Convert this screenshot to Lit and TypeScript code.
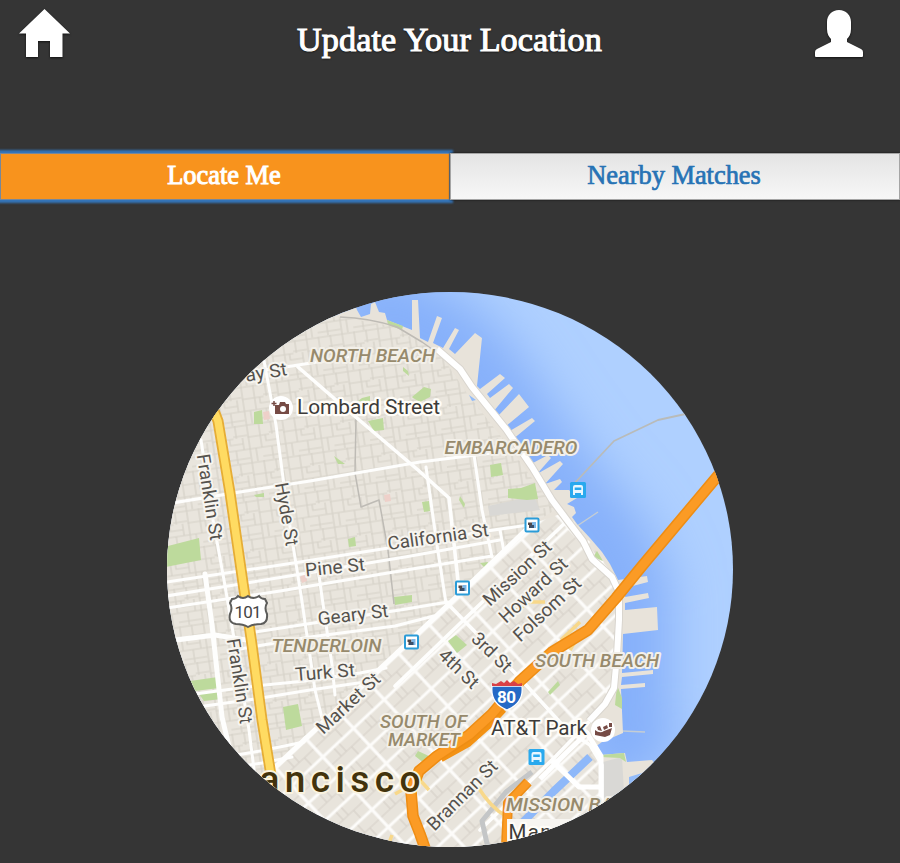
import { LitElement, html, svg, css } from "lit";
import { customElement, property, state } from "lit/decorators.js";

type Label = { t: string; x: number; y: number; r?: number; w: number; k: string };

const STREETS: Label[] = [
  { t: "ay St", x: 266, y: 372, r: -9, w: 42, k: "street" },
  { t: "Franklin St", x: 210, y: 497, r: 81, w: 87, k: "street" },
  { t: "Franklin St", x: 240, y: 681, r: 81, w: 86, k: "street" },
  { t: "Hyde St", x: 287, y: 514, r: 80, w: 64, k: "street" },
  { t: "California St", x: 438, y: 536.5, r: -8, w: 102, k: "street" },
  { t: "Pine St", x: 335, y: 567, r: -6, w: 60, k: "street" },
  { t: "Geary St", x: 353, y: 614.5, r: -7, w: 71, k: "street" },
  { t: "Turk St", x: 325, y: 672, r: -5, w: 60, k: "street" },
  { t: "Market St", x: 348, y: 703, r: -43, w: 80, k: "street" },
  { t: "Mission St", x: 517, y: 573, r: -43, w: 86, k: "street" },
  { t: "Howard St", x: 533, y: 590, r: -43, w: 86, k: "street" },
  { t: "Folsom St", x: 547, y: 609, r: -43, w: 85, k: "street" },
  { t: "3rd St", x: 492, y: 652, r: 44, w: 48, k: "street" },
  { t: "4th St", x: 459, y: 668.5, r: 44, w: 48, k: "street" },
  { t: "Brannan St", x: 462, y: 795, r: -45, w: 91, k: "street" },
];

const AREAS: Label[] = [
  { t: "NORTH BEACH", x: 372.5, y: 355, w: 125, k: "area" },
  { t: "EMBARCADERO", x: 511, y: 447.5, w: 133, k: "area" },
  { t: "TENDERLOIN", x: 326.5, y: 645.5, w: 110, k: "area" },
  { t: "SOUTH BEACH", x: 597, y: 660, w: 124, k: "area" },
  { t: "SOUTH OF", x: 423.5, y: 721, w: 87, k: "area" },
  { t: "MARKET", x: 424, y: 739.5, w: 72, k: "area" },
  { t: "MISSION BAY", x: 565, y: 804, w: 118, k: "area" },
  { t: "Lombard Street", x: 368.5, y: 407, w: 143, k: "place" },
  { t: "AT&T Park", x: 539, y: 728.5, w: 96, k: "place" },
];

const LAND =
  "M150 870V290H350L357 310L361 317L370 314L371 304L375 302L379 312L385 313L387 320L412 330L412 300L418 300L420 338L428 342L437 316L442 318L433 343L443 348L455 328L459 330L449 349L455 354L475 333L482 338L477 386L480 389L500 374L505 378L487 394L490 398L509 384L513 388L493 412L497 417L519 394L529 407L505 427L508 432L532 418L535 421L512 440L524 455L531 464L548 455L551 458L537 474L560 461L563 464L545 484L560 479L562 482L554 490L569 490L577 498L567 504L574 507L576 513L572 517L577 524L590 538L602 552L610 564L618 580L647 576L648 582L625 588V597L648 593L649 598L625 603V610L657 607L658 630L623 634L622 673L653 670V674L622 677L621 685L645 683V687L621 689L623 733L602 742L595 747L600 755L625 753L627 762L652 760L660 770V870Z";
const HILLS =
  "M150 870V300L340 317L397 327L439 352L466 392L510 448L555 510L532 524L448 602L266 772V870Z";
const SOMA =
  "M266 772L448 602L532 524L566 512L590 542L616 580L619 634L616 685L592 715L590 745L600 760V870H300Z";
const SHORE =
  "M340 300L412 328L450 350L480 385L515 438L560 500L600 545L622 590V740L650 775";
const EMBARCADERO_ROAD =
  "M437 349L460 369L472 387L506 429L532 467L552 500L567 520L583 541L592 559L612 577L619 592L619 620L617 655L614 688L605 704L589 721";
const SKYWAY =
  "M726 466L684 516L642 566L616 598L588 630L552 652L520 681L492 714L469 735L437 756L419 771L411 791L413 816L420 834L427 854";
const VAN_NESS = "M213 408L218 421L230 493L244 590L252 645L262 720L275 800";

const HILL_ROADS = [
  "M160 505L240 492L310 481L420 462L515 450",
  "M160 583L300 562L420 543L480 532L535 524",
  "M160 597L320 571L405 557L500 540",
  "M160 609L280 591L400 571L492 556",
  "M255 632L320 622L400 610L448 602",
  "M240 649L310 637L395 626L434 616",
  "M180 696L255 686L305 681L360 673L386 668",
  "M190 708L255 699L310 690L372 681",
  "M225 757L260 751L304 742",
  "M225 769L262 763L292 757",
  "M257 371L292 366L348 357",
  "M264 361L276 425L287 508L301 595L315 690L322 718",
  "M426 467L437 545L446 603",
  "M474 455L482 510L492 557",
  "M500 530L504 552",
  "M201 440L213 520L224 580L236 650L249 730L256 785",
  "M317 562L323 604L332 665L335 695",
];

const CITY_ROADS = [
  "M298 367L351 413L418 470L449 498L459 590",
  "M446 602L516 674L567 730L590 745L602 765V810",
  "M568 520L448 635L395 686",
  "M480 830L556 756L606 704",
];

const PARKS = [
  "M160 548L199 538L201 560L160 568Z",
  "M190 681L218 677L219 688L195 691Z",
  "M199 694L219 691L221 699L204 701Z",
  "M283 707L298 704L302 726L286 730Z",
  "M412 397L424 387L431 389L430 397L420 402L413 398Z",
  "M368 421L383 418L384 430L374 431Z",
  "M387 320L403 326L402 330L388 325Z",
  "M403 367L408 371L409 376L403 371Z",
  "M490 465L501 463L503 475L491 477Z",
  "M508 489L521 488L535 483L538 499L527 500L508 498Z",
  "M422 502L429 501L430 511L424 512Z",
  "M460 496L465 504L464 508L459 500Z",
  "M334 456L345 464L338 464Z",
  "M394 597L412 595V602L395 605Z",
  "M448 641L456 635L467 645L457 653Z",
  "M348 539L355 537L356 546L349 547Z",
  "M418 751L431 757L424 763L415 756Z",
  "M601 755L624 753L626 762L620 758L601 757Z",
  "M597 551L603 561L593 557Z",
  "M548 692L558 681L560 685L550 695Z",
  "M480 563L488 562L486 569Z",
  "M617 685L622 698V709L615 705Z",
  "M362 398L370 396L370 402L358 401Z",
  "M254 495L264 493V497H256Z",
  "M254 412L262 410L263 424L254 424Z",
];

@customElement("city-map")
class CityMap extends LitElement {
  static styles = css`
    :host { display: block; width: 566px; height: 555px; border-radius: 50%; overflow: hidden; }
    svg { display: block; }
    text { font-family: Roboto, "Liberation Sans", sans-serif; text-anchor: middle; paint-order: stroke; stroke: #fffdf8; stroke-linejoin: round; }
    .street { font-size: 18.5px; fill: #55524d; stroke-width: 4px; stroke: #f7f5f0; }
    .area { font-size: 18.5px; font-style: italic; font-weight: 500; fill: #978a6c; stroke-width: 4px; stroke: #f3f0e9; }
    .place { font-size: 20.5px; fill: #3d3b39; stroke-width: 4.5px; }
    .city { font-size: 37px; font-weight: 500; fill: #43330c; stroke-width: 4px; stroke: #faf3df; }
    .shield { font-size: 17px; fill: #444; stroke: none; }
    .interstate { font-size: 17px; font-weight: 700; fill: #fff; stroke: none; }
    .road { fill: none; stroke: #fefefd; stroke-linejoin: round; stroke-linecap: round; }
    .hill { stroke-width: 3px; }
    .town { stroke-width: 3.6px; }
    .line { fill: none; stroke-linejoin: round; }
    .park { fill: #bdda9c; }
  `;

  private label(l: Label) {
    return svg`<text class=${l.k} transform="translate(${l.x} ${l.y}) rotate(${l.r ?? 0})" y="6.5" textLength=${l.w} lengthAdjust="spacingAndGlyphs">${l.t}</text>`;
  }

  private station(x: number, y: number) {
    return svg`<g transform="translate(${x} ${y})">
      <rect x="-6.5" y="-6.5" width="13" height="13" rx="1" fill="#fff" stroke="#2b9cd8" stroke-width="2"/>
      <path d="M-4-2.5H0V3H-3V0H-4Z" fill="#514849"/><path d="M0-3H4V3H0Z" fill="#7db7e8"/><path d="M-1 0H2V3H-3Z" fill="#394f6b"/></g>`;
  }

  private bus(x: number, y: number) {
    return svg`<g transform="translate(${x} ${y})">
      <rect x="-8" y="-8" width="16" height="16" rx="1.5" fill="#29a9ee"/>
      <path d="M-5 5V-3Q-5-5-3-5H3Q5-5 5-3V5H3V3H-3V5Z" fill="#e8f7ff"/>
      <path d="M-3.3-2.5H3.3V0H-3.3Z" fill="#29a9ee"/></g>`;
  }

  render() {
    return html`<svg width="566" height="555" viewBox="167 292 566 555">
      <defs>
        <filter id="depth" filterUnits="userSpaceOnUse" x="150" y="200" width="620" height="700"><feGaussianBlur stdDeviation="25"/></filter>
        <pattern id="blocks" width="36" height="38" patternUnits="userSpaceOnUse" patternTransform="rotate(-8.5)">
          <rect width="36" height="38" fill="#e9e5dd"/>
          <path d="M0 1H36M0 13H22M22 11H36M0 25H36M13 34H36M1 0V38M13 0V25M25 0V13M23 25V38M31 13V25M7 25V38M18 13V19H31" fill="none" stroke="#d6d1c8" stroke-width="1.2"/>
        </pattern>
        <pattern id="grid" width="42" height="24" patternUnits="userSpaceOnUse" patternTransform="translate(415 671) rotate(-43)">
          <rect width="42" height="24" fill="#e8e4dc"/>
          <path d="M0 12H42M14 0V12M28 12V24M21 0V12" fill="none" stroke="#d6d1c8" stroke-width="1.2"/>
          <path d="M0 0V24M42 0V24M0 0H42M0 24H42" fill="none" stroke="#fdfcfa" stroke-width="3.2"/>
        </pattern>
      </defs>
      <rect x="160" y="285" width="580" height="570" fill="#afd0ff"/>
      <path d=${SHORE} class="line" stroke="#86b0fa" stroke-width="100" filter="url(#depth)"/>
      <path d="M571 487L614 441L658 420L690 413" class="line" stroke="#b9bbb9" stroke-width="1.8"/>
      <path d="M577 526L598 512M622 731L645 732" class="line" stroke="#c4cdd4" stroke-width="1.5"/>
      <path d=${LAND} fill="#e8e3da"/>
      <path d=${HILLS} fill="url(#blocks)"/>
      <path d=${SOMA} fill="url(#grid)"/>
      <path d="M603 762L622 757L624 792L603 798ZM488 506L534 496L540 510L490 516Z" fill="#d9d8d5"/>
      <path d="M469 395L476 400L472 401ZM629 777L642 773L636 785L629 784Z" fill="#92bbf9"/>
      ${PARKS.map((d) => svg`<path class="park" d=${d}/>`)}
      <path d="M263 412L269 411L270 419L264 420ZM300 577L306 573L307 581L302 583ZM384 495L390 494L391 501L385 502Z" fill="#eed0c9"/>
      <path d="M340 317Q370 318 397 327L422 342L439 354M356 417L355 473L361 507L379 500L388 550L394 604" class="line" stroke="#bebbb5" stroke-width="1.5"/>
      ${HILL_ROADS.map((d) => svg`<path class="road hill" d=${d}/>`)}
      <path class="road" stroke-width="5" d="M160 642L215 635L246 640M205 574L212 625L222 717L235 772"/>
      ${CITY_ROADS.map((d) => svg`<path class="road town" d=${d}/>`)}
      <path class="road" stroke-width="5" d="M532 524L448 605L270 772"/>
      <path d=${EMBARCADERO_ROAD} class="line" stroke="#d9d5ce" stroke-width="8"/>
      <path d=${EMBARCADERO_ROAD} class="line" stroke="#fff" stroke-width="6"/>
      <path d="M590 757L554 791L523 822" class="line" stroke="#8eb8f9" stroke-width="8"/>
      <path d="M532 772L506 792L482 821L488 848" class="line" stroke="#c4c6c7" stroke-width="5"/>
      <path d="M540 779L566 753L587 733L601 756V805M552 761L579 787H600" class="line" stroke="#fff" stroke-width="5"/>
      <path d="M506 816Q491 808 478 787M385 854L392 835M395 794L420 780L429 790M514 612L529 602L545 602M561 640L580 622M570 650L579 635" class="line" stroke="#f8d88a" stroke-width="3.5"/>
      <path d=${VAN_NESS} class="line" stroke="#e6ad35" stroke-width="11"/>
      <path d=${VAN_NESS} class="line" stroke="#ffdb62" stroke-width="7.5"/>
      <path d="M502 708L486 725L467 742L440 757" class="line" stroke="#f39214" stroke-width="11"/>
      <path d=${SKYWAY} class="line" stroke="#ee8d14" stroke-width="11.5"/>
      <path d=${SKYWAY} class="line" stroke="#fb9b25" stroke-width="8.5"/>
      <path d="M528 782L508 803L506 846" class="line" stroke="#ed8d16" stroke-width="10"/>
      <path d="M528 782L508 803L506 846" class="line" stroke="#fb9b25" stroke-width="7"/>
      <rect x="507" y="819" width="130" height="40" fill="#f7f5f1"/>
      ${STREETS.map((l) => this.label(l))}${AREAS.map((l) => this.label(l))}
      <text class="place" x="530" y="839" textLength="43">Man</text>
      <text class="city" x="340" y="791.5" textLength="161">ancisco</text>
      <path d="M232 599Q236 599 238 596Q243 600 248 596Q253 600 259 596Q261 599 265 599L267 603Q264 608 267 614Q268 623 261 624Q253 624 248 627Q243 624 236 624Q228 623 230 614Q233 608 230 603Z" fill="#fff" stroke="#5c5c5a" stroke-width="2"/>
      <text class="shield" x="248" y="618" textLength="27">101</text>
      <path d="M492 686H522Q524 703 507 710Q490 703 492 686Z" fill="#266ac6" stroke="#fff" stroke-width="1.3"/>
      <path d="M492 686V683L496 684L501 681L504 683L507 680L510 683L514 681L518 684L522 683V686Z" fill="#d94146"/>
      <text class="interstate" x="506.5" y="703" textLength="19">80</text>
      ${this.station(532, 525)}${this.station(462.5, 588)}${this.station(411.5, 642)}
      ${this.bus(578, 490)}${this.bus(536.5, 757)}
      <circle cx="281" cy="408" r="12" fill="#fff"/>
      <path d="M275 405H279L280 402H285L286 404H289V414H275Z" fill="#764b45"/><circle cx="283" cy="409" r="3" fill="#fff"/><path d="M274 401V406M271.5 403.5H276.5" stroke="#764b45" stroke-width="1.5"/>
      <circle cx="603" cy="730" r="12" fill="#fff"/>
      <path d="M595 730Q600 734 604 731L612 728L610 735L605 737L595 735ZM597 727L600 726L602 731L598 730ZM603 727L607 725L608 728L604 730ZM609 723H612V727H609Z" fill="#764b45"/>
    </svg>`;
  }
}

@customElement("tab-button")
class TabButton extends LitElement {
  @property({ type: Boolean, reflect: true }) active = false;
  static styles = css`
    :host { display: block; flex: 1; min-width: 0; }
    button { display: block; width: 100%; height: 47px; padding: 0 2px 3px 0; margin: 1px 0 0; box-sizing: border-box; border: 1px solid #a5a5a5; background: linear-gradient(#e4e4e4, #f7f7f7); color: #2773b5; font: 26.4px "Liberation Serif", serif; -webkit-text-stroke: .7px #2773b5; box-shadow: 0 0 2px #111; outline: none; }
    :host([active]) button { background: #f8931d; border-color: #77879a; color: #fff; -webkit-text-stroke: 1px #fff; box-shadow: 0 0 2px 3px #3474b8; }
  `;
  render() {
    return html`<button><slot></slot></button>`;
  }
}

@customElement("app-root")
class AppRoot extends LitElement {
  @state() private tab = 0;
  static styles = css`
    :host { display: flex; flex-direction: column; height: 863px; background: #353535; overflow: hidden; }
    header { display: grid; grid-template-columns: 51px 1fr 48px; height: 152px; padding: 9px 37px 0 19px; box-sizing: border-box; }
    .icon { display: block; fill: #fff; filter: drop-shadow(0 1px 1px #111); }
    h1 { margin: 11px 0 0 14px; text-align: center; font: 34.2px/40px "Liberation Serif", serif; letter-spacing: .1px; color: #fff; -webkit-text-stroke: 1.1px #fff; text-shadow: 0 1px 2px #000; white-space: nowrap; }
    nav { display: flex; height: 48px; }
    main { padding: 92px 0 0 167px; }
  `;
  render() {
    return html`
      <header>
        <svg class="icon" width="51" height="50" viewBox="0 0 51 50"><path d="M25.5 0L51 24.5H43.5V48H31V32H19V48H7V24.5H0Z"/></svg>
        <h1>Update Your Location</h1>
        <svg class="icon" width="48" height="50" viewBox="0 0 48 50"><path d="M24 1C31 1 36 6 36 13V20C36 25 34 28 32 30V33L46 40Q48 41 48 43V47Q48 48 47 48H1Q0 48 0 47V43Q0 41 2 40L16 33V30C14 28 12 25 12 20V13C12 6 17 1 24 1Z"/></svg>
      </header>
      <nav>
        <tab-button ?active=${this.tab === 0} @click=${() => (this.tab = 0)}>Locate Me</tab-button>
        <tab-button ?active=${this.tab === 1} @click=${() => (this.tab = 1)}>Nearby Matches</tab-button>
      </nav>
      <main><city-map></city-map></main>
    `;
  }
}
